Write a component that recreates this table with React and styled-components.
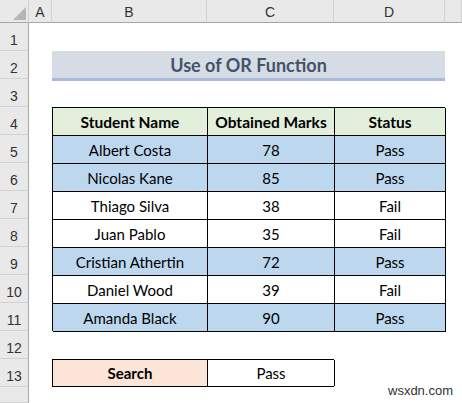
import styled, { createGlobalStyle } from "styled-components";

const GlobalStyle = createGlobalStyle`
  html, body {
    margin: 0;
    padding: 0;
    background: #fff;
  }
  body {
    font-family: Lato, "Open Sans", sans-serif;
  }
`;

const students = [
  { name: "Albert Costa", marks: 78, status: "Pass" },
  { name: "Nicolas Kane", marks: 85, status: "Pass" },
  { name: "Thiago Silva", marks: 38, status: "Fail" },
  { name: "Juan Pablo", marks: 35, status: "Fail" },
  { name: "Cristian Athertin", marks: 72, status: "Pass" },
  { name: "Daniel Wood", marks: 39, status: "Fail" },
  { name: "Amanda Black", marks: 90, status: "Pass" },
];

const columns = ["A", "B", "C", "D", ""];
const rowNumbers = Array.from({ length: 14 }, (_, i) => i + 1);

const App = () => {
  return (
    <>
      <GlobalStyle />
      <Sheet>
        <Corner>
          <svg width="29" height="23" viewBox="0 0 29 23">
            <polygon points="26,7 26,20 13,20" fill="#b5b5b5" />
          </svg>
        </Corner>
        {columns.map((c, i) => (
          <ColHead key={i} $col={i + 2}>
            {c}
          </ColHead>
        ))}
        {rowNumbers.map((n) => (
          <RowHead key={n} $row={n + 1}>
            {n < 14 ? n : ""}
          </RowHead>
        ))}

        <Title>Use of OR Function</Title>

        <DataTable>
          <Cell $head>Student Name</Cell>
          <Cell $head>Obtained Marks</Cell>
          <Cell $head>Status</Cell>
          {students.map((s) => {
            const fill = s.status === "Pass";
            return [
              <Cell key={s.name + "n"} $fill={fill}>
                {s.name}
              </Cell>,
              <Cell key={s.name + "m"} $fill={fill}>
                {s.marks}
              </Cell>,
              <Cell key={s.name + "s"} $fill={fill}>
                {s.status}
              </Cell>,
            ];
          })}
        </DataTable>

        <SearchBox>
          <SearchLabel>Search</SearchLabel>
          <SearchValue>Pass</SearchValue>
        </SearchBox>

        <Watermark>wsxdn.com</Watermark>
      </Sheet>
    </>
  );
};

export default App;

const Sheet = styled.div`
  position: relative;
  display: grid;
  grid-template-columns: 29px 23px 155px 127px 111px 17px;
  grid-template-rows: 23px repeat(13, 28px) 16px;
  width: 462px;
  height: 403px;
  overflow: hidden;
  background: #fff;
  color: #000;
`;

const Corner = styled.div`
  grid-column: 1;
  grid-row: 1;
  background: #e9e9e9;
  border-right: 1px solid #d2d2d2;
  border-bottom: 1px solid #a6a6a6;
  box-sizing: border-box;

  svg {
    display: block;
  }
`;

const ColHead = styled.div`
  grid-column: ${(p) => p.$col};
  grid-row: 1;
  display: flex;
  align-items: center;
  justify-content: center;
  background: #e9e9e9;
  border-right: 1px solid #d2d2d2;
  border-bottom: 1px solid #a6a6a6;
  box-sizing: border-box;
  font-family: "Liberation Sans", Arial, sans-serif;
  font-size: 14px;
  color: #333;
  padding-top: 2px;
`;

const RowHead = styled.div`
  grid-column: 1;
  grid-row: ${(p) => p.$row};
  display: flex;
  align-items: flex-end;
  justify-content: center;
  padding-bottom: 2px;
  background: #e9e9e9;
  border-right: 1px solid #a6a6a6;
  border-bottom: 1px solid #d2d2d2;
  box-sizing: border-box;
  font-family: "Liberation Sans", Arial, sans-serif;
  font-size: 14px;
  color: #333;
`;

const Title = styled.div`
  grid-column: 3 / 6;
  grid-row: 3;
  align-self: start;
  height: 30px;
  box-sizing: border-box;
  background: #d6dce4;
  border-bottom: 3px solid #a9b9dd;
  display: flex;
  align-items: center;
  justify-content: center;
  font-size: 18px;
  font-weight: 700;
  color: #44546a;
  padding-bottom: 0;
`;

const DataTable = styled.div`
  grid-column: 3 / 6;
  grid-row: 5 / 13;
  display: grid;
  grid-template-columns: 155px 127px 111px;
  grid-auto-rows: 28px;
  border-top: 1px solid #000;
  border-left: 1px solid #000;
  box-sizing: border-box;
`;

const Cell = styled.div`
  display: flex;
  align-items: center;
  justify-content: center;
  border-right: 1px solid #000;
  border-bottom: 1px solid #000;
  box-sizing: border-box;
  font-size: ${(p) => (p.$head ? "15.5px" : "15px")};
  font-weight: ${(p) => (p.$head ? 700 : 400)};
  background: ${(p) => (p.$head ? "#e2efda" : p.$fill ? "#bdd7ee" : "#fff")};
  padding-top: 1px;
`;

const SearchBox = styled.div`
  grid-column: 3 / 5;
  grid-row: 14;
  display: grid;
  grid-template-columns: 155px 127px;
  border: 1px solid #000;
  border-right: none;
  box-sizing: border-box;
`;

const SearchLabel = styled.div`
  display: flex;
  align-items: center;
  justify-content: center;
  background: #fce4d6;
  border-right: 1px solid #000;
  font-size: 15px;
  font-weight: 700;
`;

const SearchValue = styled.div`
  display: flex;
  align-items: center;
  justify-content: center;
  border-right: 1px solid #000;
  font-size: 15px;
`;

const Watermark = styled.div`
  position: absolute;
  left: 388px;
  top: 383px;
  font-family: "Liberation Sans", Arial, sans-serif;
  font-size: 13px;
  color: #333;
`;
